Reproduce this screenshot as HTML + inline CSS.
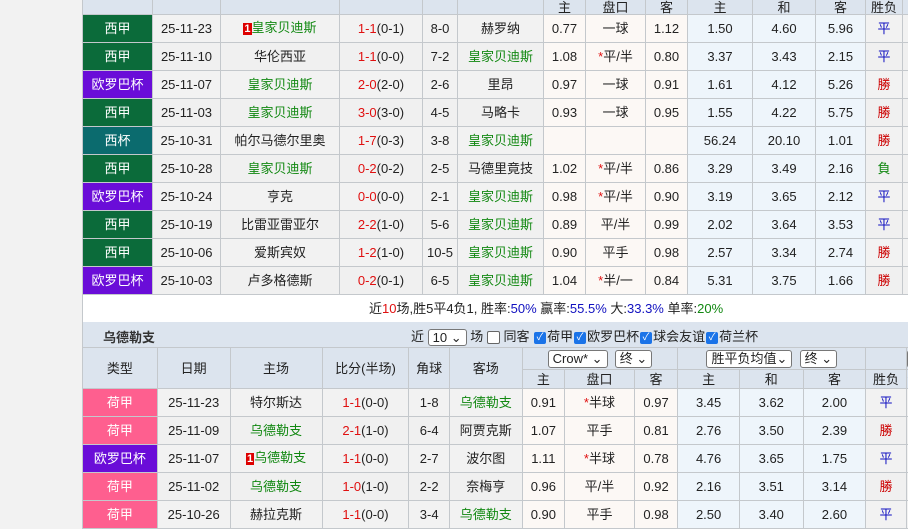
<!DOCTYPE html>
<html><head><meta charset="utf-8"><style>
body{margin:0;width:908px;height:510px;overflow:hidden;background:#f2f2f2;font-family:"Liberation Sans","Noto Sans CJK SC",sans-serif;font-size:13px;color:#222;position:relative}
table{border-collapse:collapse;table-layout:fixed;position:absolute;left:82px}
td{border:1px solid #c4c8cc;text-align:center;padding:0;white-space:nowrap;overflow:hidden;height:27px;line-height:16px}
.hd td{background:#dce4ee;height:13px;line-height:13px}
.g{background:#0b6b3a;color:#fff}.p{background:#6a0dd8;color:#fff}.t{background:#0b6b6e;color:#fff}.k{background:#fe5f8f;color:#fff}
.gr td{background:#f0f0f0}
td.o{background:#eef5fb}td.pk{background:#fcf8f5}
.gr td.o{background:#eef5fb}.gr td.pk{background:#fcf8f5}
.gr td.g{background:#0b6b3a}.gr td.p{background:#6a0dd8}.gr td.t{background:#0b6b6e}.gr td.k{background:#fe5f8f}
.h{color:#118811}.r{color:#e01010}.b{color:#1010c0}.w{color:#cc0000}.l{color:#118811}
.n1{background:#d00;color:#fff;font-size:11px;font-weight:bold;padding:0 1px}
.s{color:#e01010}
.sel{display:inline-block;border:1px solid #777;border-radius:3px;background:#fff;height:16px;line-height:16px;padding:0 4px;font-size:13px;vertical-align:middle}
.cb{display:inline-block;width:12px;height:12px;border-radius:2px;background:#1a73e8;color:#fff;font-size:10px;line-height:12px;text-align:center;vertical-align:middle;margin:0 1px}
.cbe{display:inline-block;width:11px;height:11px;border:1px solid #666;border-radius:2px;background:#fff;vertical-align:middle}
</style></head><body>
<table style="top:-14px;width:840px">
<colgroup><col style="width:70px"><col style="width:68px"><col style="width:119px"><col style="width:83px"><col style="width:35px"><col style="width:86px"><col style="width:42px"><col style="width:60px"><col style="width:42px"><col style="width:65px"><col style="width:63px"><col style="width:50px"><col style="width:37px"><col style="width:20px"></colgroup>
<tr class="hd"><td style="height:27px"></td><td></td><td></td><td></td><td></td><td></td><td style="vertical-align:bottom">主</td><td style="vertical-align:bottom">盘口</td><td style="vertical-align:bottom">客</td><td style="vertical-align:bottom">主</td><td style="vertical-align:bottom">和</td><td style="vertical-align:bottom">客</td><td style="vertical-align:bottom">胜负</td><td></td></tr>
<tr><td class="g">西甲</td><td>25-11-23</td><td><span class="n1">1</span><span class="h">皇家贝迪斯</span></td><td><span class="s">1-1</span>(0-1)</td><td>8-0</td><td>赫罗纳</td><td class="pk">0.77</td><td class="pk">一球</td><td class="pk">1.12</td><td class="o">1.50</td><td class="o">4.60</td><td class="o">5.96</td><td class="b">平</td><td></td></tr>
<tr class="gr"><td class="g">西甲</td><td>25-11-10</td><td>华伦西亚</td><td><span class="s">1-1</span>(0-0)</td><td>7-2</td><td class="h">皇家贝迪斯</td><td class="pk">1.08</td><td class="pk"><span class="s">*</span>平/半</td><td class="pk">0.80</td><td class="o">3.37</td><td class="o">3.43</td><td class="o">2.15</td><td class="b">平</td><td></td></tr>
<tr><td class="p">欧罗巴杯</td><td>25-11-07</td><td class="h">皇家贝迪斯</td><td><span class="s">2-0</span>(2-0)</td><td>2-6</td><td>里昂</td><td class="pk">0.97</td><td class="pk">一球</td><td class="pk">0.91</td><td class="o">1.61</td><td class="o">4.12</td><td class="o">5.26</td><td class="w">勝</td><td></td></tr>
<tr class="gr"><td class="g">西甲</td><td>25-11-03</td><td class="h">皇家贝迪斯</td><td><span class="s">3-0</span>(3-0)</td><td>4-5</td><td>马略卡</td><td class="pk">0.93</td><td class="pk">一球</td><td class="pk">0.95</td><td class="o">1.55</td><td class="o">4.22</td><td class="o">5.75</td><td class="w">勝</td><td></td></tr>
<tr><td class="t">西杯</td><td>25-10-31</td><td>帕尔马德尔里奥</td><td><span class="s">1-7</span>(0-3)</td><td>3-8</td><td class="h">皇家贝迪斯</td><td class="pk"></td><td class="pk"></td><td class="pk"></td><td class="o">56.24</td><td class="o">20.10</td><td class="o">1.01</td><td class="w">勝</td><td></td></tr>
<tr class="gr"><td class="g">西甲</td><td>25-10-28</td><td class="h">皇家贝迪斯</td><td><span class="s">0-2</span>(0-2)</td><td>2-5</td><td>马德里竟技</td><td class="pk">1.02</td><td class="pk"><span class="s">*</span>平/半</td><td class="pk">0.86</td><td class="o">3.29</td><td class="o">3.49</td><td class="o">2.16</td><td class="l">負</td><td></td></tr>
<tr><td class="p">欧罗巴杯</td><td>25-10-24</td><td>亨克</td><td><span class="s">0-0</span>(0-0)</td><td>2-1</td><td class="h">皇家贝迪斯</td><td class="pk">0.98</td><td class="pk"><span class="s">*</span>平/半</td><td class="pk">0.90</td><td class="o">3.19</td><td class="o">3.65</td><td class="o">2.12</td><td class="b">平</td><td></td></tr>
<tr class="gr"><td class="g">西甲</td><td>25-10-19</td><td>比雷亚雷亚尔</td><td><span class="s">2-2</span>(1-0)</td><td>5-6</td><td class="h">皇家贝迪斯</td><td class="pk">0.89</td><td class="pk">平/半</td><td class="pk">0.99</td><td class="o">2.02</td><td class="o">3.64</td><td class="o">3.53</td><td class="b">平</td><td></td></tr>
<tr><td class="g">西甲</td><td>25-10-06</td><td>爱斯宾奴</td><td><span class="s">1-2</span>(1-0)</td><td>10-5</td><td class="h">皇家贝迪斯</td><td class="pk">0.90</td><td class="pk">平手</td><td class="pk">0.98</td><td class="o">2.57</td><td class="o">3.34</td><td class="o">2.74</td><td class="w">勝</td><td></td></tr>
<tr class="gr"><td class="p">欧罗巴杯</td><td>25-10-03</td><td>卢多格德斯</td><td><span class="s">0-2</span>(0-1)</td><td>6-5</td><td class="h">皇家贝迪斯</td><td class="pk">1.04</td><td class="pk"><span class="s">*</span>半/一</td><td class="pk">0.84</td><td class="o">5.31</td><td class="o">3.75</td><td class="o">1.66</td><td class="w">勝</td><td></td></tr>
<tr><td colspan="14" style="background:#fff;height:27px;text-align:left;padding-left:286px">近<span class="r">10</span>场,胜5平4负1, 胜率:<span class="b">50%</span> 赢率:<span class="b">55.5%</span> 大:<span class="b">33.3%</span> 单率:<span style="color:#118811">20%</span></td></tr>
</table>
<div style="position:absolute;left:82px;top:322px;width:826px;height:25px;background:#dce4ee;border-left:1px solid #c4c8cc">
<span style="position:absolute;left:20px;top:5px;font-weight:bold;color:#333">乌德勒支</span>
<span style="position:absolute;left:328px;top:4px;white-space:nowrap">近 <span class="sel" style="height:15px;line-height:15px">10 ⌄</span> 场 <span class="cbe"></span> 同客 <span class="cb">✓</span>荷甲<span class="cb">✓</span>欧罗巴杯<span class="cb">✓</span>球会友谊<span class="cb">✓</span>荷兰杯</span>
</div>
<table style="top:347px;width:840px">
<colgroup><col style="width:74px"><col style="width:72px"><col style="width:91px"><col style="width:86px"><col style="width:40px"><col style="width:72px"><col style="width:42px"><col style="width:69px"><col style="width:43px"><col style="width:61px"><col style="width:63px"><col style="width:62px"><col style="width:40px"><col style="width:15px"></colgroup>
<tr class="hd"><td rowspan="2">类型</td><td rowspan="2">日期</td><td rowspan="2">主场</td><td rowspan="2">比分(半场)</td><td rowspan="2">角球</td><td rowspan="2">客场</td><td colspan="3" style="height:21px"><span class="sel">Crow* ⌄</span>&nbsp;&nbsp;<span class="sel">终 ⌄</span></td><td colspan="3"><span class="sel">胜平负均值⌄</span>&nbsp;&nbsp;<span class="sel">终 ⌄</span></td><td></td><td><span class="sel">全</span></td></tr>
<tr class="hd"><td style="height:18px">主</td><td>盘口</td><td>客</td><td>主</td><td>和</td><td>客</td><td>胜负</td><td>让</td></tr>
<tr><td class="k">荷甲</td><td>25-11-23</td><td>特尔斯达</td><td><span class="s">1-1</span>(0-0)</td><td>1-8</td><td class="h">乌德勒支</td><td class="pk">0.91</td><td class="pk"><span class="s">*</span>半球</td><td class="pk">0.97</td><td class="o">3.45</td><td class="o">3.62</td><td class="o">2.00</td><td class="b">平</td><td></td></tr>
<tr class="gr"><td class="k">荷甲</td><td>25-11-09</td><td class="h">乌德勒支</td><td><span class="s">2-1</span>(1-0)</td><td>6-4</td><td>阿贾克斯</td><td class="pk">1.07</td><td class="pk">平手</td><td class="pk">0.81</td><td class="o">2.76</td><td class="o">3.50</td><td class="o">2.39</td><td class="w">勝</td><td></td></tr>
<tr><td class="p">欧罗巴杯</td><td>25-11-07</td><td><span class="n1">1</span><span class="h">乌德勒支</span></td><td><span class="s">1-1</span>(0-0)</td><td>2-7</td><td>波尔图</td><td class="pk">1.11</td><td class="pk"><span class="s">*</span>半球</td><td class="pk">0.78</td><td class="o">4.76</td><td class="o">3.65</td><td class="o">1.75</td><td class="b">平</td><td></td></tr>
<tr class="gr"><td class="k">荷甲</td><td>25-11-02</td><td class="h">乌德勒支</td><td><span class="s">1-0</span>(1-0)</td><td>2-2</td><td>奈梅亨</td><td class="pk">0.96</td><td class="pk">平/半</td><td class="pk">0.92</td><td class="o">2.16</td><td class="o">3.51</td><td class="o">3.14</td><td class="w">勝</td><td></td></tr>
<tr><td class="k">荷甲</td><td>25-10-26</td><td>赫拉克斯</td><td><span class="s">1-1</span>(0-0)</td><td>3-4</td><td class="h">乌德勒支</td><td class="pk">0.90</td><td class="pk">平手</td><td class="pk">0.98</td><td class="o">2.50</td><td class="o">3.40</td><td class="o">2.60</td><td class="b">平</td><td></td></tr>
</table>
</body></html>
